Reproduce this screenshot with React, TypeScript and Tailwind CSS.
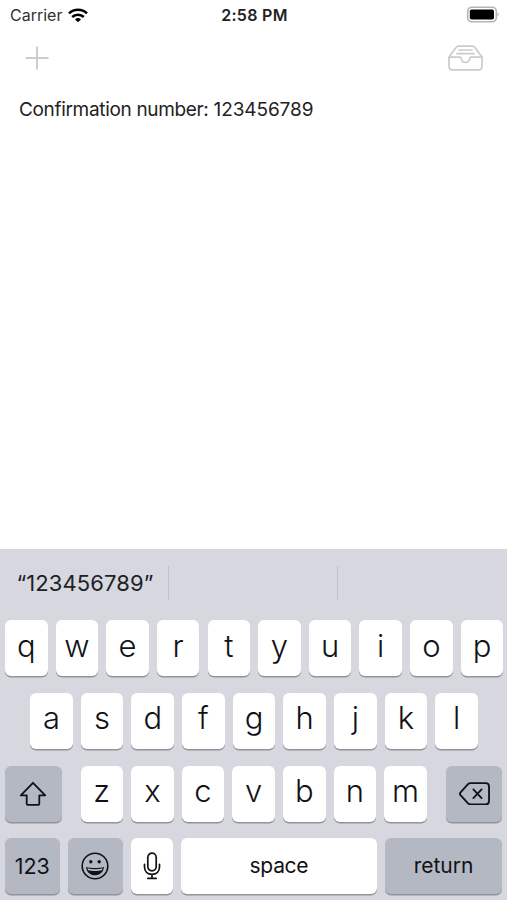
import React from 'react';
import clsx from 'clsx';

const topRow = ['q', 'w', 'e', 'r', 't', 'y', 'u', 'i', 'o', 'p'];
const homeRow = ['a', 's', 'd', 'f', 'g', 'h', 'j', 'k', 'l'];
const bottomRow = ['z', 'x', 'c', 'v', 'b', 'n', 'm'];

type KeyProps = {
  className?: string;
  dark?: boolean;
  label?: string;
  children: React.ReactNode;
};

const Key: React.FC<KeyProps> = ({ className, dark, label, children }) => (
  <button
    aria-label={label}
    className={clsx(
      'flex h-14 shrink-0 items-center justify-center rounded-[6px] shadow-[0_1.5px_0_#929499]',
      dark ? 'bg-[#b4b8c3]' : 'bg-white',
      className,
    )}
  >
    {children}
  </button>
);

const LetterKeys: React.FC<{ letters: string[] }> = ({ letters }) => (
  <div className="flex gap-[8.15px]">
    {letters.map((letter) => (
      <Key key={letter} className="w-[42.5px] pb-[6px] text-[31px] leading-none font-[340]">
        {letter}
      </Key>
    ))}
  </div>
);

const StatusBar = () => (
  <div className="grid h-[30px] grid-cols-3 items-center pr-2 pl-[10px]">
    <div className="flex items-center gap-[6px] text-[16px] text-[#333]">
      <span>Carrier</span>
      <svg width="20" height="15" viewBox="0 0 20 15" fill="none" stroke="#000" strokeWidth="2.6">
        <path d="M1 5.4a13 13 0 0 1 18 0" />
        <path d="M4.2 9a8.4 8.4 0 0 1 11.6 0" />
        <path d="M10 14.3 7 11.5a4.4 4.4 0 0 1 6 0Z" fill="#000" stroke="none" />
      </svg>
    </div>
    <span className="text-center text-[16px] font-semibold tracking-[0.3px] text-[#222]">2:58 PM</span>
    <svg className="justify-self-end" width="33" height="18" viewBox="0 0 33 18">
      <rect x="1.7" y="1.2" width="28.6" height="14.6" rx="4.2" fill="#fff" stroke="#b5b5b5" strokeWidth="1.6" />
      <rect x="3.8" y="3.5" width="24.2" height="10" rx="1.8" fill="#000" />
      <path d="M31.5 6.5v4c1.500-.5 1.500-3.500 0-4Z" fill="#aaa" />
    </svg>
  </div>
);

const Toolbar = () => (
  <div className="flex h-[56px] items-center justify-between pr-6 pl-[25px]">
    <button aria-label="New note">
      <svg width="24" height="24" viewBox="0 0 24 24" stroke="#cdcdcd" strokeWidth="2">
        <path d="M12 .5v23M.5 12h23" />
      </svg>
    </button>
    <button aria-label="Inbox">
      <svg width="35" height="26" viewBox="0 0 35 26" fill="none" stroke="#cbcbcf" strokeWidth="1.7" strokeLinejoin="round" strokeLinecap="round">
        <path d="M1 12 7.700 3c1-1.400 1.800-1.800 3.300-1.800h13c1.500 0 2.300.4 3.300 1.800L34 12v9.200c0 2.500-1.300 3.600-3.600 3.600H4.600C2.300 24.800 1 23.700 1 21.200Z" />
        <path d="M1 12.200h11.200c.8 0 .9.500 1 1.100.4 2.500 2 4.100 4.300 4.100s3.900-1.600 4.300-4.100c.1-.6.2-1.100 1-1.100H34" />
        <path d="M11 5h13M9 8.700h17" />
      </svg>
    </button>
  </div>
);

const Keyboard = () => (
  <div className="h-[351px] bg-[#d6d7df] text-[#111216]">
    {/* Suggestions */}
    <div className="flex h-[71px] items-start pt-[17px]">
      <div className="flex h-[34px] w-[169px] items-center justify-center border-r border-[#bfc0c8] pl-[2px] text-[22px] tracking-[0.1px] text-[#202126]">
        “123456789”
      </div>
      <div className="h-[34px] w-[169px] border-r border-[#bfc0c8]" />
    </div>

    <div className="flex flex-col gap-[16.8px] pl-[5px]">
      <LetterKeys letters={topRow} />
      <div className="pl-[25.2px]">
        <LetterKeys letters={homeRow} />
      </div>
      <div className="flex gap-[19px]">
        <Key dark label="Shift" className="w-[56.5px]">
          <svg width="28" height="26" viewBox="0 0 28 26" fill="none" stroke="currentColor" strokeWidth="1.8" strokeLinejoin="round">
            <path d="M14 1.800 26.200 14.300H20.300V22.800Q20.300 23.800 19.300 23.800H8.700Q7.700 23.800 7.700 22.800V14.300H1.800Z" />
          </svg>
        </Key>
        <LetterKeys letters={bottomRow} />
        <Key dark label="Delete" className="w-[56.5px]">
          <svg width="31" height="23.500" viewBox="0 0 32 24" fill="none" stroke="currentColor" strokeWidth="1.9" strokeLinejoin="round" strokeLinecap="round">
            <path d="M12 1h15.500c2.300 0 3.500 1.200 3.500 3.500v15c0 2.300-1.200 3.500-3.500 3.500H12c-1.200 0-1.900-.3-2.700-1.100L1.600 13.500c-.9-1-.9-2 0-3L9.300 2.100C10.100 1.300 10.800 1 12 1Z" />
            <path d="m14.800 7.500 8.500 9M23.300 7.500l-8.500 9" />
          </svg>
        </Key>
      </div>
      <div className="flex gap-[8.1px]">
        <Key dark className="w-[54.5px] text-[21.500px]">
          123
        </Key>
        <Key dark label="Emoji" className="w-[55px]">
          <svg width="28" height="28" viewBox="0 0 28 28" fill="none" stroke="currentColor" strokeWidth="1.6">
            <circle cx="14" cy="14" r="12.800" />
            <circle cx="9.800" cy="9.700" r="1.700" fill="currentColor" stroke="none" />
            <circle cx="18.200" cy="9.700" r="1.700" fill="currentColor" stroke="none" />
            <path d="M5 15c5 1.400 13 1.400 18 0-.6 5.200-4.200 8.300-9 8.300S5.600 20.200 5 15Z" fill="currentColor" stroke="none" />
            <path d="M6.500 16.300c4.500 1.200 10.500 1.200 15 0l-.6 2c-3.700.9-10.100.9-13.800 0Z" fill="#b4b8c3" stroke="none" />
          </svg>
        </Key>
        <Key label="Dictate" className="w-[42.5px] pl-px">
          <svg width="18" height="28" viewBox="0 0 18 28" fill="none" stroke="currentColor" strokeWidth="1.700" strokeLinecap="round">
            <rect x="4.800" y="1.200" width="8.400" height="17.600" rx="4.200" />
            <path d="M1.500 12.300v2.500c0 4.600 3 7.500 7.500 7.500s7.500-2.900 7.500-7.500v-2.500M9 22.300v4M4.800 26.300h8.400" />
          </svg>
        </Key>
        <Key className="w-[195.300px] pb-[2px] text-[21px] tracking-[-0.3px]">space</Key>
        <Key dark className="w-[117.800px] pb-[2px] text-[21px]">
          return
        </Key>
      </div>
    </div>
  </div>
);

export default function App() {
  return (
    <div className="flex h-[900px] w-[507px] flex-col overflow-hidden bg-white font-['Inter',sans-serif]">
      <StatusBar />
      <Toolbar />
      <main className="flex-1 px-[19px] pt-[10px] text-[19px] leading-7 tracking-[-0.33px] text-[#222]">
        Confirmation number: <span className="tracking-[-0.1px]">123456789</span>
      </main>
      <Keyboard />
    </div>
  );
}
